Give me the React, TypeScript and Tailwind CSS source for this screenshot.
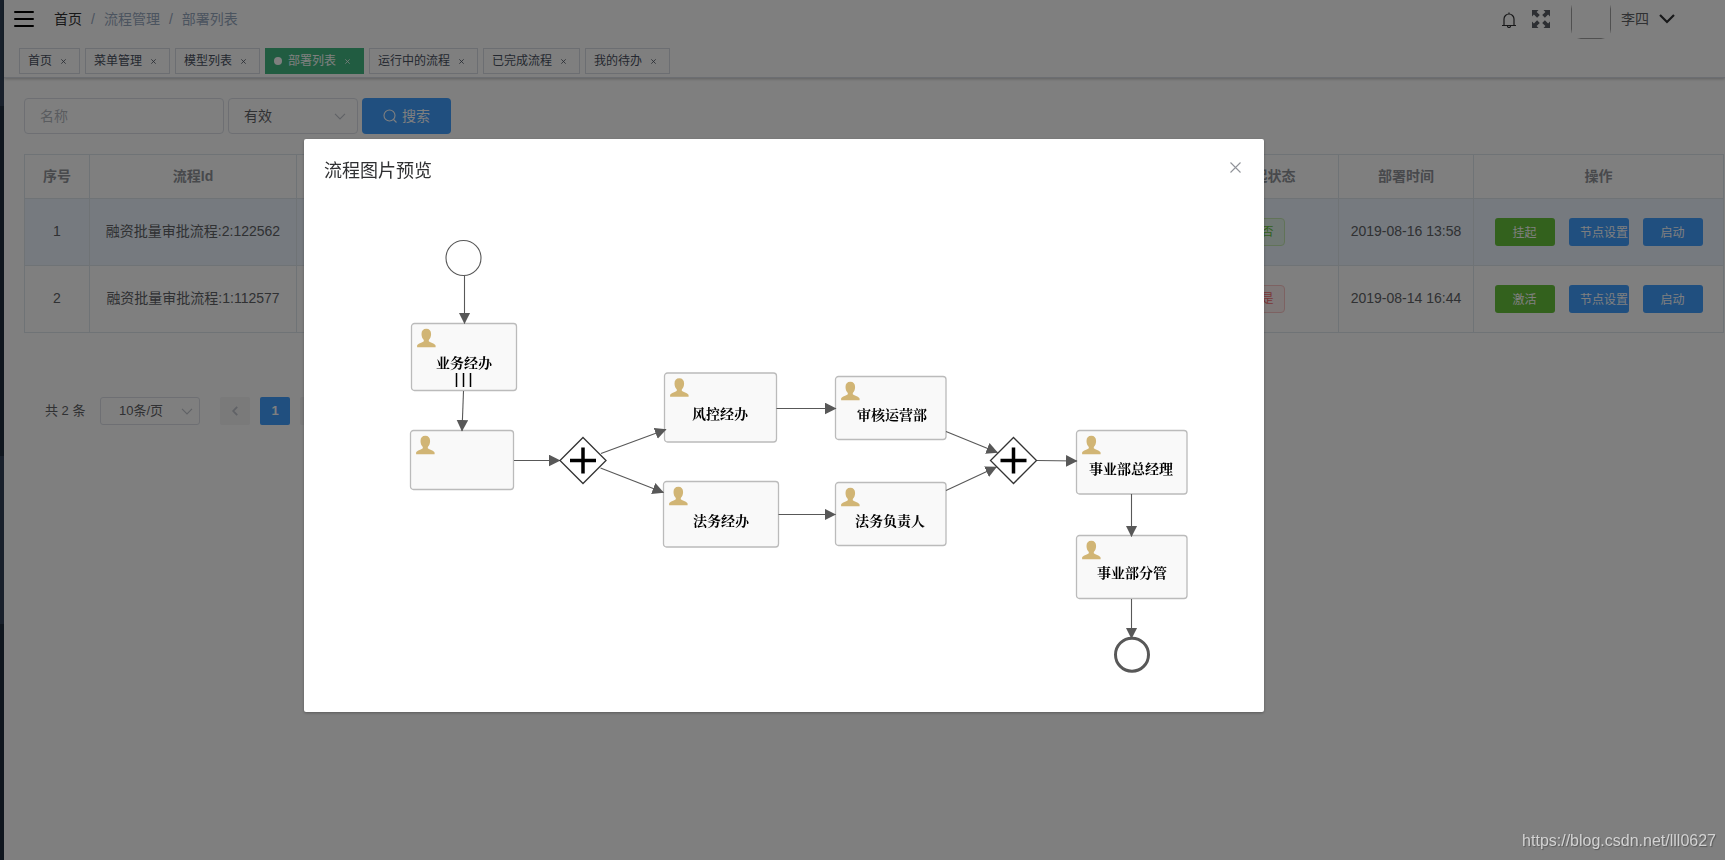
import { useState } from "react";
import clsx from "clsx";

type TagItem = {
  title: string;
  active?: boolean;
};

type Deployment = {
  index: number;
  processId: string;
  suspended: boolean;
  deployedAt: string;
};

type TaskNode = {
  x: number;
  y: number;
  width: number;
  height: number;
  label?: string;
  labelX?: number;
  labelY?: number;
  multi?: boolean;
};

const tags: TagItem[] = [
  { title: "首页" },
  { title: "菜单管理" },
  { title: "模型列表" },
  { title: "部署列表", active: true },
  { title: "运行中的流程" },
  { title: "已完成流程" },
  { title: "我的待办" },
];

const deployments: Deployment[] = [
  {
    index: 1,
    processId: "融资批量审批流程:2:122562",
    suspended: false,
    deployedAt: "2019-08-16 13:58",
  },
  {
    index: 2,
    processId: "融资批量审批流程:1:112577",
    suspended: true,
    deployedAt: "2019-08-14 16:44",
  },
];

const tasks: TaskNode[] = [
  { x: 87.5, y: 100.5, width: 105, height: 67, label: "业务经办", labelX: 140, labelY: 140, multi: true },
  { x: 86.5, y: 207.5, width: 103, height: 59 },
  { x: 340.5, y: 150, width: 112, height: 69, label: "风控经办", labelX: 396, labelY: 191 },
  { x: 339.5, y: 258.5, width: 115, height: 65.5, label: "法务经办", labelX: 397, labelY: 298 },
  { x: 511.5, y: 153.5, width: 110.5, height: 63, label: "审核运营部", labelX: 568, labelY: 192 },
  { x: 511.5, y: 259.5, width: 110.5, height: 63, label: "法务负责人", labelX: 566, labelY: 298 },
  { x: 752.5, y: 207.5, width: 110.5, height: 63.5, label: "事业部总经理", labelX: 807, labelY: 246 },
  { x: 752.5, y: 312.5, width: 110.5, height: 63, label: "事业部分管", labelX: 808, labelY: 350 },
];

// x1, y1, x2, y2
const flows = [
  [140.5, 52.5, 140.5, 100.5],
  [139.5, 168, 138, 208],
  [190, 237.5, 236, 237.5],
  [277, 230.5, 342, 206.5],
  [276.5, 245, 339.5, 269.5],
  [452.5, 185.5, 512, 185.5],
  [454.5, 291.5, 511.5, 291.5],
  [622, 208.5, 673.5, 229.5],
  [622, 267.5, 672.5, 244],
  [713, 237.5, 753, 238],
  [807.5, 271, 807.5, 313.5],
  [807.5, 376, 807.5, 415.5],
];

export default function App() {
  const [open, setOpen] = useState(true);

  return (
    <div className="flex min-h-screen bg-white font-['Liberation_Sans','Noto_Sans_CJK_SC',sans-serif] text-sm text-[#606266]">
      <aside className="flex w-1 shrink-0 flex-col bg-[#1f2d3d]">
        <div className="h-[106px] bg-[#304156]" />
        <div className="h-[350px]" />
        <div className="h-[168px] bg-[#304156]" />
      </aside>

      <div className="min-w-0 flex-1">
        <header className="border-b border-[#d8dce5] shadow-[0_1px_3px_0_rgba(0,0,0,0.25)]">
          <Navbar />
          <TagsView />
        </header>

        <main className="pt-5 pr-px pl-5">
          <FilterBar />
          <DeploymentTable />
          <Pagination />
        </main>
      </div>

      {open && <PreviewDialog onClose={() => setOpen(false)} />}

      <a
        href="https://blog.csdn.net/lll0627"
        className="fixed right-[9px] bottom-[7px] z-20 text-base leading-6 text-[#d2d2d2] [text-shadow:1px_1px_1px_rgba(0,0,0,0.3)]"
      >
        https://blog.csdn.net/lll0627
      </a>
    </div>
  );
}

function Navbar() {
  return (
    <div className="flex h-11 items-start justify-between pr-[50px] pl-[10px]">
      <div className="flex h-[38px] items-center gap-5">
        <button type="button" aria-label="菜单">
          <svg width="20" height="16" viewBox="0 0 20 16" stroke="#000" strokeWidth="2" strokeLinecap="round">
            <path d="M1 1h18M1 8h18M1 15h18" />
          </svg>
        </button>
        <nav className="flex items-center text-[#97a8be]">
          <a href="#" className="text-[#303133]">首页</a>
          <span className="px-[9px]">/</span>
          <span>流程管理</span>
          <span className="px-[9px]">/</span>
          <span>部署列表</span>
        </nav>
      </div>

      <div className="flex items-start">
        <div className="flex h-[38px] items-center gap-[15px]">
          <button type="button" aria-label="消息">
            <svg width="16" height="17" viewBox="0 0 16 17" fill="none" stroke="#303133" strokeWidth="1.2">
              <path d="M1 14.5h14M3 14.5V8a5 5 0 0 1 10 0v6.5M8 3V1.5M6.5 15a1.5 1.5 0 0 0 3 0" />
            </svg>
          </button>
          <button type="button" aria-label="全屏">
            <svg width="18" height="18" viewBox="0 0 18 18" fill="#5a5e66">
              <path d="M0 0h6.5L4.6 1.9l3.2 3.2-2.7 2.7-3.2-3.2L0 6.5zM18 0v6.5l-1.9-1.9-3.2 3.2-2.7-2.7 3.2-3.2L11.5 0zM0 18v-6.5l1.9 1.9 3.2-3.2 2.7 2.7-3.2 3.2L6.5 18zM18 18h-6.5l1.9-1.9-3.2-3.2 2.7-2.7 3.2 3.2 1.9-1.9z" />
            </svg>
          </button>
        </div>
        <div className="-mt-px ml-[21px] h-10 w-10 overflow-hidden rounded-[10px]">
          <div className="h-full border border-[#a0a0a0]" />
        </div>
        <button type="button" className="ml-[10px] flex h-[38px] items-center gap-[10px]">
          李四
          <svg width="16" height="10" viewBox="0 0 16 10" fill="none" stroke="#303133" strokeWidth="2.2">
            <path d="M1 1l7 7 7-7" />
          </svg>
        </button>
      </div>
    </div>
  );
}

function TagsView() {
  return (
    <div className="flex gap-[5px] pt-1 pb-[3px] pl-[15px]">
      {tags.map((tag) => (
        <div
          key={tag.title}
          className={clsx(
            "flex h-[26px] items-center border px-2 text-xs",
            tag.active
              ? "border-[#42b983] bg-[#42b983] text-white"
              : "border-[#d8dce5] text-[#495060]"
          )}
        >
          {tag.active && <span className="mr-[6px] h-2 w-2 rounded-full bg-white" />}
          <a href="#">{tag.title}</a>
          <button type="button" aria-label="关闭" className="ml-[3px] flex h-4 w-4 items-center justify-center">
            <svg width="5" height="5" viewBox="0 0 5 5" stroke="currentColor" strokeWidth="0.8">
              <path d="M0.3 0.3l4.4 4.4M4.7 0.3L0.3 4.7" />
            </svg>
          </button>
        </div>
      ))}
    </div>
  );
}

function FilterBar() {
  return (
    <form className="flex gap-1" onSubmit={(e) => e.preventDefault()}>
      <input
        type="text"
        aria-label="名称"
        placeholder="名称"
        className="h-9 w-[200px] rounded border border-[#dcdfe6] px-[15px] placeholder:text-[#b4b8bf]"
      />
      <div className="relative">
        <select
          aria-label="状态"
          className="h-9 w-[130px] appearance-none rounded border border-[#dcdfe6] px-[15px]"
        >
          <option>有效</option>
        </select>
        <ChevronDown className="pointer-events-none absolute top-[15px] right-3" />
      </div>
      <button
        type="submit"
        className="flex h-9 items-center gap-[5px] rounded bg-[#409eff] px-[21px] text-white"
      >
        <svg width="14" height="14" viewBox="0 0 14 14" fill="none" stroke="currentColor" strokeWidth="1.1">
          <circle cx="6.5" cy="6.5" r="5.5" />
          <path d="M10.5 10.5l3 3" />
        </svg>
        搜索
      </button>
    </form>
  );
}

function ChevronDown({ className }: { className?: string }) {
  return (
    <svg width="12" height="7" viewBox="0 0 12 7" fill="none" stroke="#c0c4cc" strokeWidth="1.2" className={className}>
      <path d="M1 0.8l5 5 5-5" />
    </svg>
  );
}

function DeploymentTable() {
  return (
    <table className="mt-5 w-full table-fixed border-collapse text-center [&_td]:border [&_td]:border-[#dfe6ec] [&_th]:border [&_th]:border-[#dfe6ec] [&_th]:pb-[2px]">
      <colgroup>
        <col className="w-[65px]" />
        <col className="w-[207px]" />
        <col />
        <col className="w-[142px]" />
        <col className="w-[135px]" />
        <col className="w-[250px]" />
      </colgroup>
      <thead>
        <tr className="h-11 text-[#909399]">
          <th>序号</th>
          <th>流程Id</th>
          <th />
          <th>挂起状态</th>
          <th>部署时间</th>
          <th>操作</th>
        </tr>
      </thead>
      <tbody>
        {deployments.map((row) => (
          <tr key={row.index} className={clsx("h-[67px]", row.index === 1 && "bg-[#ecf5ff]")}>
            <td className="pb-[2px]">{row.index}</td>
            <td className="pb-[2px] whitespace-nowrap">{row.processId}</td>
            <td />
            <td>
              <span
                className={clsx(
                  "inline-block h-7 rounded border px-[10px] text-xs leading-[26px]",
                  row.suspended
                    ? "border-[#fbc4c4] bg-[#fef0f0] text-[#f56c6c]"
                    : "border-[#c2e7b0] bg-[#e1f3e8] text-[#67c23a]"
                )}
              >
                {row.suspended ? "是" : "否"}
              </span>
            </td>
            <td className="pb-[2px] whitespace-nowrap">{row.deployedAt}</td>
            <td>
              <div className="flex justify-center gap-[14px] text-xs text-white">
                <button type="button" className="h-7 w-[60px] rounded-[3px] bg-[#67c23a] pt-[2px]">
                  {row.suspended ? "激活" : "挂起"}
                </button>
                <button type="button" className="h-7 w-[60px] rounded-[3px] bg-[#409eff] pt-[2px] pl-[11px] whitespace-nowrap">
                  节点设置
                </button>
                <button type="button" className="h-7 w-[60px] rounded-[3px] bg-[#409eff] pt-[2px]">
                  启动
                </button>
              </div>
            </td>
          </tr>
        ))}
      </tbody>
    </table>
  );
}

function Pagination() {
  return (
    <div className="mt-16 flex items-center pl-[21px] text-[13px]">
      <span className="w-[55px]">共 2 条</span>
      <div className="relative mr-5">
        <select
          aria-label="每页条数"
          className="h-7 w-[100px] appearance-none rounded-[3px] border border-[#dcdfe6] pl-[18px]"
        >
          <option>10条/页</option>
        </select>
        <ChevronDown className="pointer-events-none absolute top-[11px] right-[7px]" />
      </div>
      <div className="flex gap-[10px]">
        <button type="button" aria-label="上一页" className="flex h-7 w-[30px] items-center justify-center rounded-[2px] bg-[#f4f4f5]">
          <svg width="6" height="10" viewBox="0 0 6 10" fill="none" stroke="#c0c4cc" strokeWidth="1.8">
            <path d="M5.2 0.8L1.2 5l4 4.2" />
          </svg>
        </button>
        <button type="button" className="h-7 w-[30px] rounded-[2px] bg-[#409eff] font-bold text-white">
          1
        </button>
        <button type="button" aria-label="下一页" className="flex h-7 w-[30px] items-center justify-center rounded-[2px] bg-[#f4f4f5]">
          <svg width="6" height="10" viewBox="0 0 6 10" fill="none" stroke="#c0c4cc" strokeWidth="1.8">
            <path d="M0.8 0.8l4 4.2-4 4.2" />
          </svg>
        </button>
      </div>
    </div>
  );
}

function PreviewDialog({ onClose }: { onClose: () => void }) {
  return (
    <div className="fixed inset-0 z-10 overflow-auto bg-black/50 pt-[139px] pr-5 pl-[304px]">
      <div
        role="dialog"
        aria-labelledby="dialog-title"
        className="w-full max-w-[960px] rounded-[2px] bg-white shadow-[0_1px_3px_rgba(0,0,0,0.3)]"
      >
        <div className="flex items-start justify-between px-5 pt-5 pb-[10px]">
          <h2 id="dialog-title" className="text-lg leading-6 text-[#303133]">
            流程图片预览
          </h2>
          <button type="button" aria-label="关闭" onClick={onClose} className="p-[3px]">
            <svg width="11" height="11" viewBox="0 0 11 11" stroke="#909399" strokeWidth="1.1">
              <path d="M0.5 0.5l10 10M10.5 0.5l-10 10" />
            </svg>
          </button>
        </div>
        <div className="px-5 py-[30px]">
          <ProcessDiagram />
        </div>
      </div>
    </div>
  );
}

function ProcessDiagram() {
  return (
    <svg viewBox="0 0 920 459" className="block h-auto w-full">
      <defs>
        <marker id="arrow" markerWidth="12" markerHeight="12" refX="11" refY="6" orient="auto" markerUnits="userSpaceOnUse">
          <path d="M0 0.2L11.5 6L0 11.8z" fill="#585858" />
        </marker>
      </defs>

      <circle cx="139.5" cy="35" r="17.5" fill="#fff" stroke="#585858" strokeWidth="1.1" />

      {tasks.map((task) => (
        <Task key={`${task.x}-${task.y}`} task={task} />
      ))}

      {flows.map(([x1, y1, x2, y2]) => (
        <line
          key={`${x1}-${y1}`}
          x1={x1}
          y1={y1}
          x2={x2}
          y2={y2}
          stroke="#585858"
          strokeWidth="1.1"
          markerEnd="url(#arrow)"
        />
      ))}

      <Gateway x={259} y={237.5} />
      <Gateway x={689.5} y={237.5} />

      <circle cx="808" cy="431.7" r="16.5" fill="#fff" stroke="#585858" strokeWidth="3" />
    </svg>
  );
}

function Task({ task }: { task: TaskNode }) {
  return (
    <g transform={`translate(${task.x} ${task.y})`}>
      <rect width={task.width} height={task.height} rx="3" fill="#f9f9f9" stroke="#bbb" strokeWidth="1.3" />
      <path
        transform="translate(5.5 5)"
        d="M9.3 0.2C6.200 0.2 4.500 2.200 4.500 5.600c0 2.600 0.900 4.700 2.300 5.900v1.200C5.500 13.800 0.100 15.300 0.100 17.200v1.500h18.500v-1.500c0-1.900-5.400-3.400-6.800-4.500v-1.200c1.400-1.200 2.300-3.300 2.300-5.900 0-3.400-1.700-5.400-4.800-5.400z"
        fill="#d1b575"
      />
      {task.label && (
        <text
          x={task.labelX! - task.x}
          y={task.labelY! - task.y + 5}
          textAnchor="middle"
          className="fill-black font-['Noto_Serif_CJK_SC','Noto_Sans_CJK_SC',serif] text-[14px] font-bold"
        >
          {task.label}
        </text>
      )}
      {task.multi && <path d="M45 49.5v14M52 49.5v14M59 49.5v14" stroke="#000" strokeWidth="1.5" />}
    </g>
  );
}

function Gateway({ x, y }: { x: number; y: number }) {
  return (
    <g transform={`translate(${x} ${y})`}>
      <path d="M0 -23L23 0L0 23L-23 0z" fill="#fff" stroke="#333" strokeWidth="1.3" />
      <path d="M-13 0h26M0 -13v26" stroke="#000" strokeWidth="3.5" />
    </g>
  );
}
